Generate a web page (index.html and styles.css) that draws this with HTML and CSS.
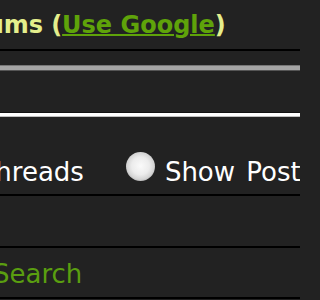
FILE: index.html
```html
<!DOCTYPE html>
<html>
<head>
<meta charset="utf-8">
<link rel="stylesheet" href="styles.css">
</head>
<body>
<div class="page">
  <div class="row head">
    <span class="title">Forums</span>
    <span class="paren">(<a href="#" class="glink">Use Google</a>)</span>
  </div>
  <div class="row panel">
    <div class="field"><div class="field-in"><div class="field-core"></div></div></div>
    <div class="choices">
      <label class="choice first"><span class="radio"></span><span class="label-text">Show Threads</span></label>
      <label class="choice"><span class="radio"></span><span class="label-text">Show Posts</span></label>
    </div>
  </div>
  <div class="row empty"></div>
  <div class="row foot">
    <a href="#" class="search">Search</a>
  </div>
</div>
</body>
</html>
```

FILE: styles.css
```css
html, body {
  margin: 0;
  padding: 0;
  background: #222222;
}
body {
  width: 300px;
  height: 300px;
  overflow: hidden;
  font-family: "DejaVu Sans", Verdana, sans-serif;
}
.page {
  width: 300px;
}
.row {
  border-bottom: 2px solid #000;
  white-space: nowrap;
}
.head {
  height: 49px;
  display: flex;
  align-items: center;
  font-size: 24px;
  line-height: 28px;
  font-weight: bold;
  color: #e4ee8c;
}
.title {
  margin-left: -57px;
  margin-right: 8px;
}
.glink {
  color: #5fa30a;
  text-decoration: underline;
  text-decoration-thickness: 2px;
}
.panel {
  padding: 14px 0 7px;
}
.field {
  margin: 0 -10px;
  border-top: 1px solid #777777;
  border-bottom: 1px solid #c0c0c0;
}
.field-in {
  border-top: 4px solid #a5a5a5;
  border-bottom: 3px solid #ffffff;
}
.field-core {
  height: 41px;
  background: #222222;
  border-top: 1px solid #555555;
  border-bottom: 1px solid #111111;
}
.choices {
  margin-top: 35px;
  display: flex;
  align-items: baseline;
  gap: 42px;
  margin-left: -141px;
  font-size: 26px;
  line-height: 30px;
  word-spacing: 3px;
  color: #ffffff;
}
.choice {
  display: flex;
  align-items: baseline;
  gap: 10px;
}
.radio {
  display: block;
  flex: none;
  width: 29px;
  height: 29px;
  border-radius: 50%;
  background: radial-gradient(circle at 50% 48%, #fafafa 0%, #ececec 42%, #d4d4d4 64%, #a0a0a0 82%, #606060 100%);
}
.empty {
  height: 50px;
}
.foot {
  height: 38px;
  padding-top: 11px;
  font-size: 26px;
  line-height: 30px;
}
.search {
  margin-left: -7px;
  color: #5a9e10;
  text-decoration: none;
}
```
